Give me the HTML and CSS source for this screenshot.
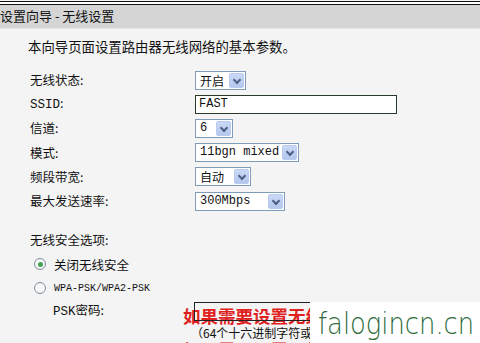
FILE: index.html
```html
<!DOCTYPE html>
<html lang="zh-CN">
<head>
<meta charset="utf-8">
<title>设置向导 - 无线设置</title>
<link rel="stylesheet" href="styles.css">
</head>
<body>
<div class="page">
  <div class="topline"></div>
  <div class="header">设置向导 - 无线设置</div>
  <div class="content">
    <p class="intro">本向导页面设置路由器无线网络的基本参数。</p>
    <div class="form">
      <div class="label">无线状态:</div>
      <div class="ctl"><span class="sel w51"><span class="val">开启</span><span class="arrow"></span></span></div>
      <div class="label"><span class="mono">SSID</span>:</div>
      <div class="ctl"><span class="input w202 mono">FAST</span></div>
      <div class="label">信道:</div>
      <div class="ctl"><span class="sel w38"><span class="val mono">6</span><span class="arrow"></span></span></div>
      <div class="label">模式:</div>
      <div class="ctl"><span class="sel w104"><span class="val mono">11bgn mixed</span><span class="arrow"></span></span></div>
      <div class="label">频段带宽:</div>
      <div class="ctl"><span class="sel w56"><span class="val">自动</span><span class="arrow"></span></span></div>
      <div class="label">最大发送速率:</div>
      <div class="ctl"><span class="sel w90"><span class="val mono">300Mbps</span><span class="arrow"></span></span></div>
    </div>
    <div class="sec">无线安全选项:</div>
    <div class="radio-row first"><span class="radio on"></span><span>关闭无线安全</span></div>
    <div class="radio-row"><span class="radio"></span><span class="mono small">WPA-PSK/WPA2-PSK</span></div>
    <div class="psk">
      <div class="psk-label"><span class="mono">PSK</span>密码:</div>
      <div class="psk-right">
        <div class="psk-box"></div>
        <div class="red">如果需要设置无线安全，请设置</div>
        <div class="hint">（64个十六进制字符或8-63个ASCII码字符）</div>
        <div class="red">如果需要设置无线安全，请设置</div>
      </div>
    </div>
  </div>
  <div class="watermark"><span class="wm-text">falogincn.cn</span></div>
</div>
</body>
</html>
```
FILE: styles.css
```css
html, body {
  margin: 0;
  padding: 0;
}
body {
  width: 480px;
  height: 343px;
  overflow: hidden;
  background: #f4f4f4;
  font-family: "Noto Sans CJK SC", "Liberation Sans", sans-serif;
  font-size: 12.5px;
  color: #111;
}
.page {
  position: relative;
  width: 480px;
  height: 343px;
  overflow: hidden;
}
.mono {
  font-family: "Liberation Mono", "Noto Sans CJK SC", monospace;
}
.small {
  font-size: 10px;
}
.topline {
  margin-top: 1px;
  height: 2px;
  background: #fff;
  border-top: 1px solid #111;
  border-bottom: 1px solid #111;
}
.header {
  height: 23px;
  line-height: 22px;
  background: #d5d5d5;
  font-size: 13px;
  border-bottom: 1px solid #e4e4e4;
}
.content {
  padding-left: 28px;
}
.intro {
  margin: 0;
  padding-top: 9px;
  line-height: 16px;
  height: 16px;
  font-size: 13.4px;
}
.form {
  display: grid;
  grid-template-columns: 167px auto;
  grid-auto-rows: 24.2px;
  margin-top: 14px;
  align-items: center;
}
.label {
  padding-left: 2px;
  line-height: 16px;
}
.ctl {
  display: flex;
  align-items: center;
}
.sel, .input {
  box-sizing: border-box;
  height: 19px;
  background: #fff;
  border: 1px solid #7f9db9;
  display: flex;
  align-items: center;
  justify-content: space-between;
  padding: 1px 1px 1px 4px;
  font-size: 12px;
  line-height: 15px;
}
.input {
  border: 1px solid #2a3a2a;
  justify-content: flex-start;
  padding-left: 3px;
}
.val {
  white-space: nowrap;
}
.arrow {
  width: 15px;
  height: 15px;
  box-sizing: border-box;
  background: linear-gradient(#c9d8f5, #b4c7ee);
  border: 1px solid #b8cbf0;
  border-radius: 2px;
  position: relative;
  flex: none;
}
.arrow::after {
  content: "";
  position: absolute;
  left: 4px;
  top: 3px;
  width: 4px;
  height: 4px;
  border-right: 2px solid #4d6185;
  border-bottom: 2px solid #4d6185;
  transform: rotate(45deg);
}
.w51 { width: 51px; }
.w38 { width: 38px; }
.w104 { width: 104px; }
.w56 { width: 56px; }
.w90 { width: 90px; }
.w202 { width: 202px; }
.sec {
  margin-top: 19px;
  padding-left: 2px;
  line-height: 16px;
}
.radio-row {
  display: flex;
  align-items: center;
  gap: 8px;
  padding-left: 6px;
  height: 24px;
}
.radio-row.first {
  margin-top: 4px;
}
.radio {
  width: 12px;
  height: 12px;
  box-sizing: border-box;
  border-radius: 50%;
  border: 1px solid #7e8f9c;
  background: radial-gradient(circle, #fafafa 55%, #e1e4e6 100%);
  position: relative;
}
.radio.on::after {
  content: "";
  position: absolute;
  left: 2.5px;
  top: 2.5px;
  width: 5px;
  height: 5px;
  border-radius: 50%;
  background: #3fa34d;
}
.psk {
  display: flex;
  margin-top: 2px;
}
.psk-label {
  box-sizing: border-box;
  width: 155px;
  flex: none;
  padding-left: 25px;
  line-height: 16px;
}
.psk-right {
  position: relative;
}
.psk-box {
  position: absolute;
  left: 11px;
  top: 0;
  width: 200px;
  height: 17px;
  border: 1px solid #222;
}
.red {
  color: #e0221f;
  font-weight: bold;
  font-size: 17.5px;
  line-height: 20px;
  white-space: nowrap;
  margin-top: 4px;
}
.hint {
  padding-left: 8px;
  line-height: 14px;
  font-size: 12px;
  white-space: nowrap;
}
.hint + .red {
  margin-top: 0;
}
.watermark {
  position: absolute;
  left: 310px;
  top: 302px;
  width: 180px;
  height: 50px;
  background: #fff;
  color: #2d6a3c;
  font-family: "DejaVu Sans", sans-serif;
  font-weight: 200;
  font-size: 30px;
  line-height: 44px;
  padding-left: 8px;
  white-space: nowrap;
}
.wm-text {
  display: inline-block;
  transform: scaleX(0.86);
  transform-origin: left center;
}
```
